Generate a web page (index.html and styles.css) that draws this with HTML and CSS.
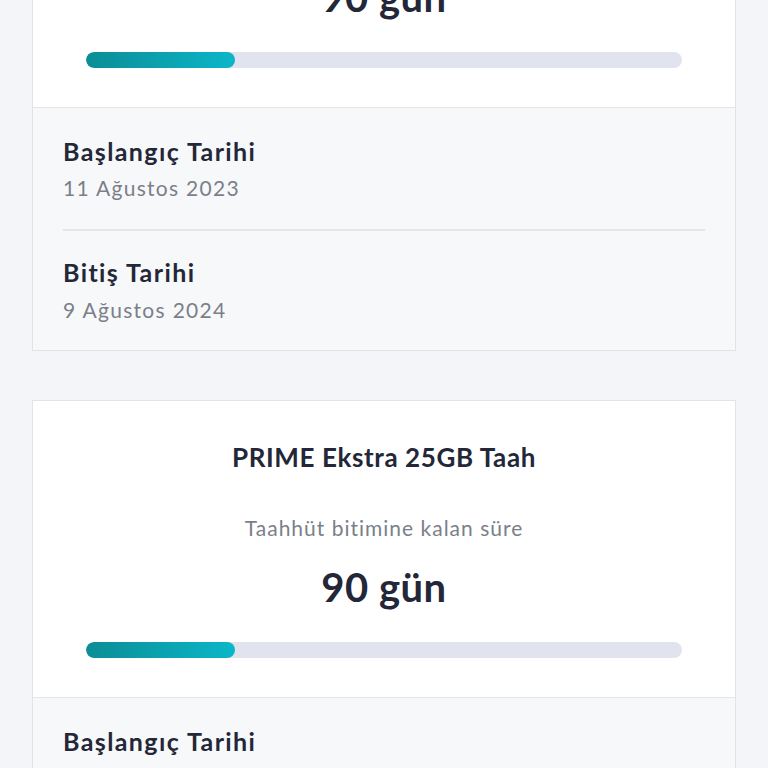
FILE: index.html
```html
<!DOCTYPE html>
<html lang="tr">
<head>
<meta charset="utf-8">
<link rel="stylesheet" href="styles.css">
</head>
<body>
<div class="page">
  <section class="card">
    <div class="card-top">
      <h2 class="plan">PRIME Ekstra 25GB Taah</h2>
      <p class="caption">Taahhüt bitimine kalan süre</p>
      <p class="remaining">90 gün</p>
      <div class="track"><div class="fill" style="width:25%"></div></div>
    </div>
    <div class="card-bottom">
      <div class="row">
        <div class="label">Başlangıç Tarihi</div>
        <div class="value">11 Ağustos 2023</div>
      </div>
      <div class="row">
        <div class="label">Bitiş Tarihi</div>
        <div class="value">9 Ağustos 2024</div>
      </div>
    </div>
  </section>
  <section class="card">
    <div class="card-top">
      <h2 class="plan">PRIME Ekstra 25GB Taah</h2>
      <p class="caption">Taahhüt bitimine kalan süre</p>
      <p class="remaining">90 gün</p>
      <div class="track"><div class="fill" style="width:25%"></div></div>
    </div>
    <div class="card-bottom">
      <div class="row">
        <div class="label">Başlangıç Tarihi</div>
        <div class="value">11 Ağustos 2023</div>
      </div>
      <div class="row">
        <div class="label">Bitiş Tarihi</div>
        <div class="value">9 Ağustos 2024</div>
      </div>
    </div>
  </section>
</div>
</body>
</html>
```
FILE: styles.css
```css
* { box-sizing: border-box; }
html, body {
  margin: 0;
  padding: 0;
  background: #f4f5f8;
  overflow: hidden;
}
body {
  font-family: "Lato", "Noto Sans", sans-serif;
  color: #232738;
}
.page {
  display: flex;
  flex-direction: column;
  gap: 49px;
  padding: 0 32px;
  margin-top: -190px;
}
.card {
  border: 1px solid #e1e3e8;
  background: #ffffff;
}
.card-top {
  display: flex;
  flex-direction: column;
  align-items: center;
  padding: 40px 53px 39px;
  text-align: center;
}
.plan {
  margin: 0;
  font-size: 26px;
  line-height: 32px;
  font-weight: 700;
  letter-spacing: 0.6px;
}
.caption {
  margin: 41px 0 0;
  font-size: 21px;
  line-height: 28px;
  color: #7b7f89;
  letter-spacing: 1px;
}
.remaining {
  margin: 21px 0 0;
  font-size: 40px;
  line-height: 48px;
  font-weight: 700;
  letter-spacing: 0.5px;
}
.track {
  margin-top: 31px;
  width: 100%;
  height: 16px;
  border-radius: 8px;
  background: #e1e4ee;
  overflow: hidden;
}
.fill {
  height: 100%;
  border-radius: 8px;
  background: linear-gradient(90deg, #0b8d95, #0bb6c9);
}
.card-bottom {
  border-top: 1px solid #e3e5e9;
  background: #f7f8fa;
  padding: 0 30px;
}
.row {
  padding: 27px 0 27px;
}
.row + .row {
  border-top: 2px solid #e3e5ea;
  padding-top: 25px;
  padding-bottom: 26px;
}
.label {
  font-size: 25px;
  line-height: 32px;
  font-weight: 700;
  letter-spacing: 1.4px;
}
.value {
  margin-top: 7px;
  font-size: 21px;
  line-height: 28px;
  color: #7b7f89;
  letter-spacing: 1.3px;
}
.row + .row .value {
  margin-top: 8px;
}
```
